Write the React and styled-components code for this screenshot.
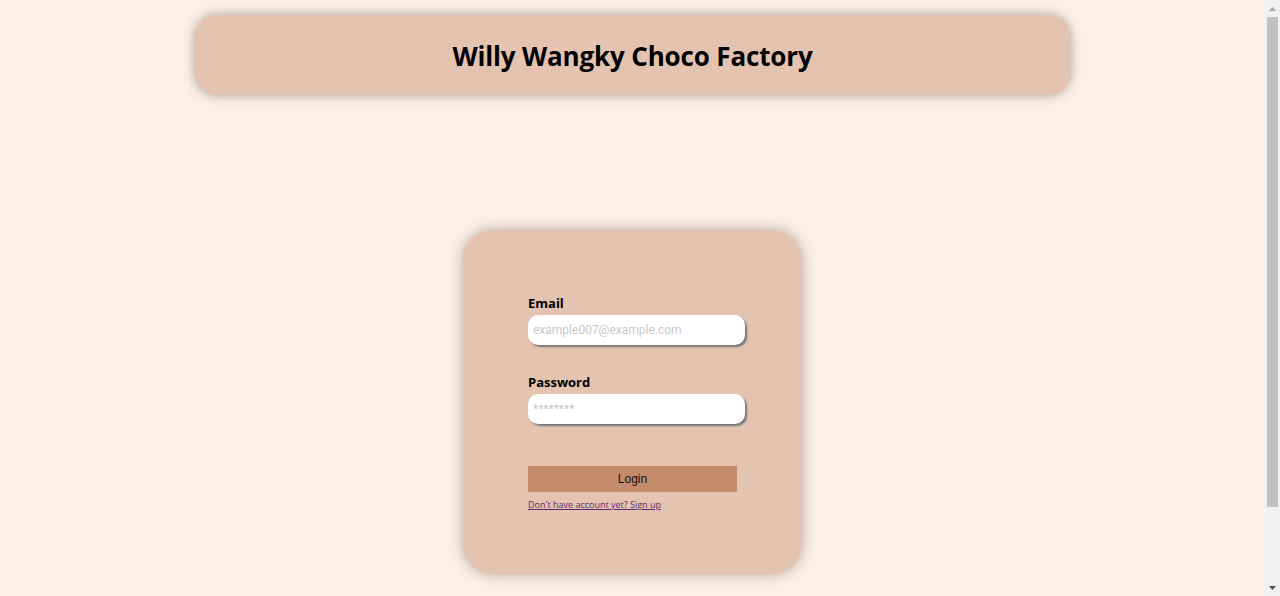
import React from 'react';
import styled, { createGlobalStyle } from 'styled-components';

const GlobalStyle = createGlobalStyle`
  html, body {
    margin: 0;
    padding: 0;
    background: #fdefe5;
  }
  html {
    overflow-y: hidden;
  }
  body {
    font-family: "Open Sans", "Liberation Sans", sans-serif;
  }
`;

const Page = styled.div`
  width: calc(100% - 15px);
  display: flex;
  flex-direction: column;
  align-items: center;
  padding: 15px 0 109px;
`;

/* fake browser scrollbar, drawn over the right edge */
const ScrollTrack = styled.div`
  position: fixed;
  top: 0;
  right: 0;
  width: 15px;
  height: 100%;
  background: #f1f1f1;
  display: flex;
  flex-direction: column;
  align-items: center;
  justify-content: space-between;
`;

const ScrollArrow = styled.div`
  height: 17px;
  display: flex;
  align-items: center;
  justify-content: center;
  svg { display: block; }
`;

const ScrollThumb = styled.div`
  position: absolute;
  top: 17px;
  left: 2px;
  width: 11px;
  height: 490px;
  background: #c1c1c1;
`;

const Header = styled.header`
  width: 875px;
  height: 80px;
  display: flex;
  align-items: center;
  justify-content: center;
  background: #e4c3b0;
  border-radius: 22px;
  box-shadow: 0 0 12px rgba(0, 0, 0, 0.35);
`;

const Title = styled.h1`
  margin: 0;
  padding-top: 2px;
  font-size: 26px;
  font-weight: 700;
  letter-spacing: -0.15px;
  color: #000;
`;

const Card = styled.form`
  margin-top: 135px;
  width: 339px;
  height: 344px;
  box-sizing: border-box;
  padding: 65px 65px 0;
  background: #e4c3b0;
  border-radius: 30px;
  box-shadow: 0 0 14px rgba(0, 0, 0, 0.3);
  display: flex;
  flex-direction: column;
`;

const Field = styled.div`
  display: flex;
  flex-direction: column;
  margin-bottom: ${p => p.$gap || 0}px;
`;

const Label = styled.label`
  font-size: 13px;
  font-weight: 700;
  line-height: 16px;
  color: #000;
  margin-bottom: 4px;
`;

const Input = styled.input`
  width: 217px;
  height: 30px;
  box-sizing: border-box;
  border: none;
  border-radius: 10px;
  background: #fff;
  padding: 0 5px;
  font-family: "Roboto", "Liberation Sans", sans-serif;
  font-size: 12px;
  box-shadow: 2px 2px 2px #777;
  outline: none;
  &::placeholder {
    color: #c8c8c8;
  }
`;

const Button = styled.button`
  width: 209px;
  height: 26px;
  margin-top: 42px;
  border: none;
  background: #c48b6d;
  color: #111;
  font-family: "Liberation Sans", Arial, sans-serif;
  font-size: 12px;
  cursor: pointer;
`;

const SignUp = styled.a`
  margin-top: 6px;
  font-size: 9px;
  color: #5a2a6e;
  text-decoration: underline;
`;

export default function App() {
  return (
    <>
      <GlobalStyle />
      <Page>
        <Header>
          <Title>Willy Wangky Choco Factory</Title>
        </Header>
        <Card onSubmit={e => e.preventDefault()}>
          <Field $gap={29}>
            <Label htmlFor="email">Email</Label>
            <Input id="email" type="email" placeholder="example007@example.com" />
          </Field>
          <Field>
            <Label htmlFor="password">Password</Label>
            <Input id="password" type="password" placeholder="********" />
          </Field>
          <Button type="submit">Login</Button>
          <SignUp href="#">Don't have account yet? Sign up</SignUp>
        </Card>
      </Page>
      <ScrollTrack>
        <ScrollArrow>
          <svg width="7" height="4" viewBox="0 0 7 4"><path d="M3.5 0L7 4H0z" fill="#a3a3a3" /></svg>
        </ScrollArrow>
        <ScrollThumb />
        <ScrollArrow>
          <svg width="7" height="4" viewBox="0 0 7 4"><path d="M0 0h7L3.5 4z" fill="#505050" /></svg>
        </ScrollArrow>
      </ScrollTrack>
    </>
  );
}
